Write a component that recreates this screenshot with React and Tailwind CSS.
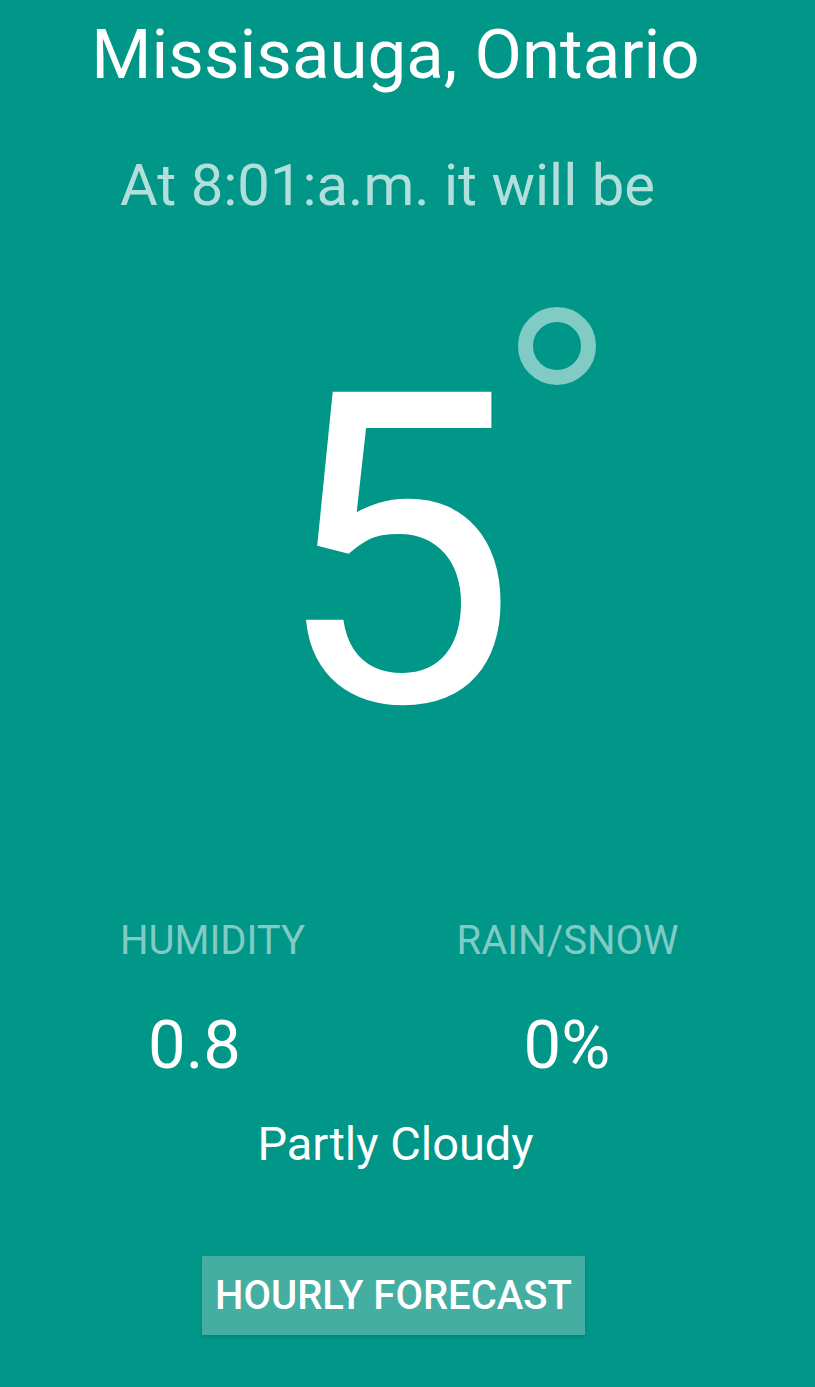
export default function App() {
  const roboto = { fontFamily: 'Roboto, "Liberation Sans", sans-serif' }
  return (
    <div className="w-[815px] h-[1387px] bg-[#009688] flex flex-col items-center pr-[24px] overflow-hidden" style={roboto}>
      <h1 className="mt-[20px] text-[69px] leading-none text-white font-normal">Missisauga, Ontario</h1>
      <p className="mt-[67px] mr-[16px] text-[58px] leading-none text-[#b2dfdb]">At 8:01:a.m. it will be</p>

      <div className="relative mt-[121px]">
        <div className="text-[435px] leading-none text-white">5</div>
        <div className="absolute left-[245px] top-[-28px] w-[78px] h-[78px] rounded-full border-[15px] border-[#80cbc4]" />
      </div>

      <div className="mt-[151px] w-full grid grid-cols-2">
        <div className="flex flex-col">
          <div className="pl-[120px] text-[40px] leading-none text-[#80cbc4]">HUMIDITY</div>
          <div className="mt-[51px] pl-[148px] text-[67px] leading-none text-white">0.8</div>
        </div>
        <div className="flex flex-col">
          <div className="pl-[61px] text-[40px] leading-none text-[#80cbc4]">RAIN/SNOW</div>
          <div className="mt-[51px] pl-[128px] text-[67px] leading-none text-white">0%</div>
        </div>
      </div>

      <p className="mt-[41px] text-[47px] leading-none text-white">Partly Cloudy</p>

      <button className="mt-[89px] mr-[4px] w-[383px] h-[79px] bg-[#45aea3] text-white font-medium text-[40px] leading-none shadow-[0_2px_3px_rgba(0,0,0,0.12)]">
        HOURLY FORECAST
      </button>
    </div>
  )
}
